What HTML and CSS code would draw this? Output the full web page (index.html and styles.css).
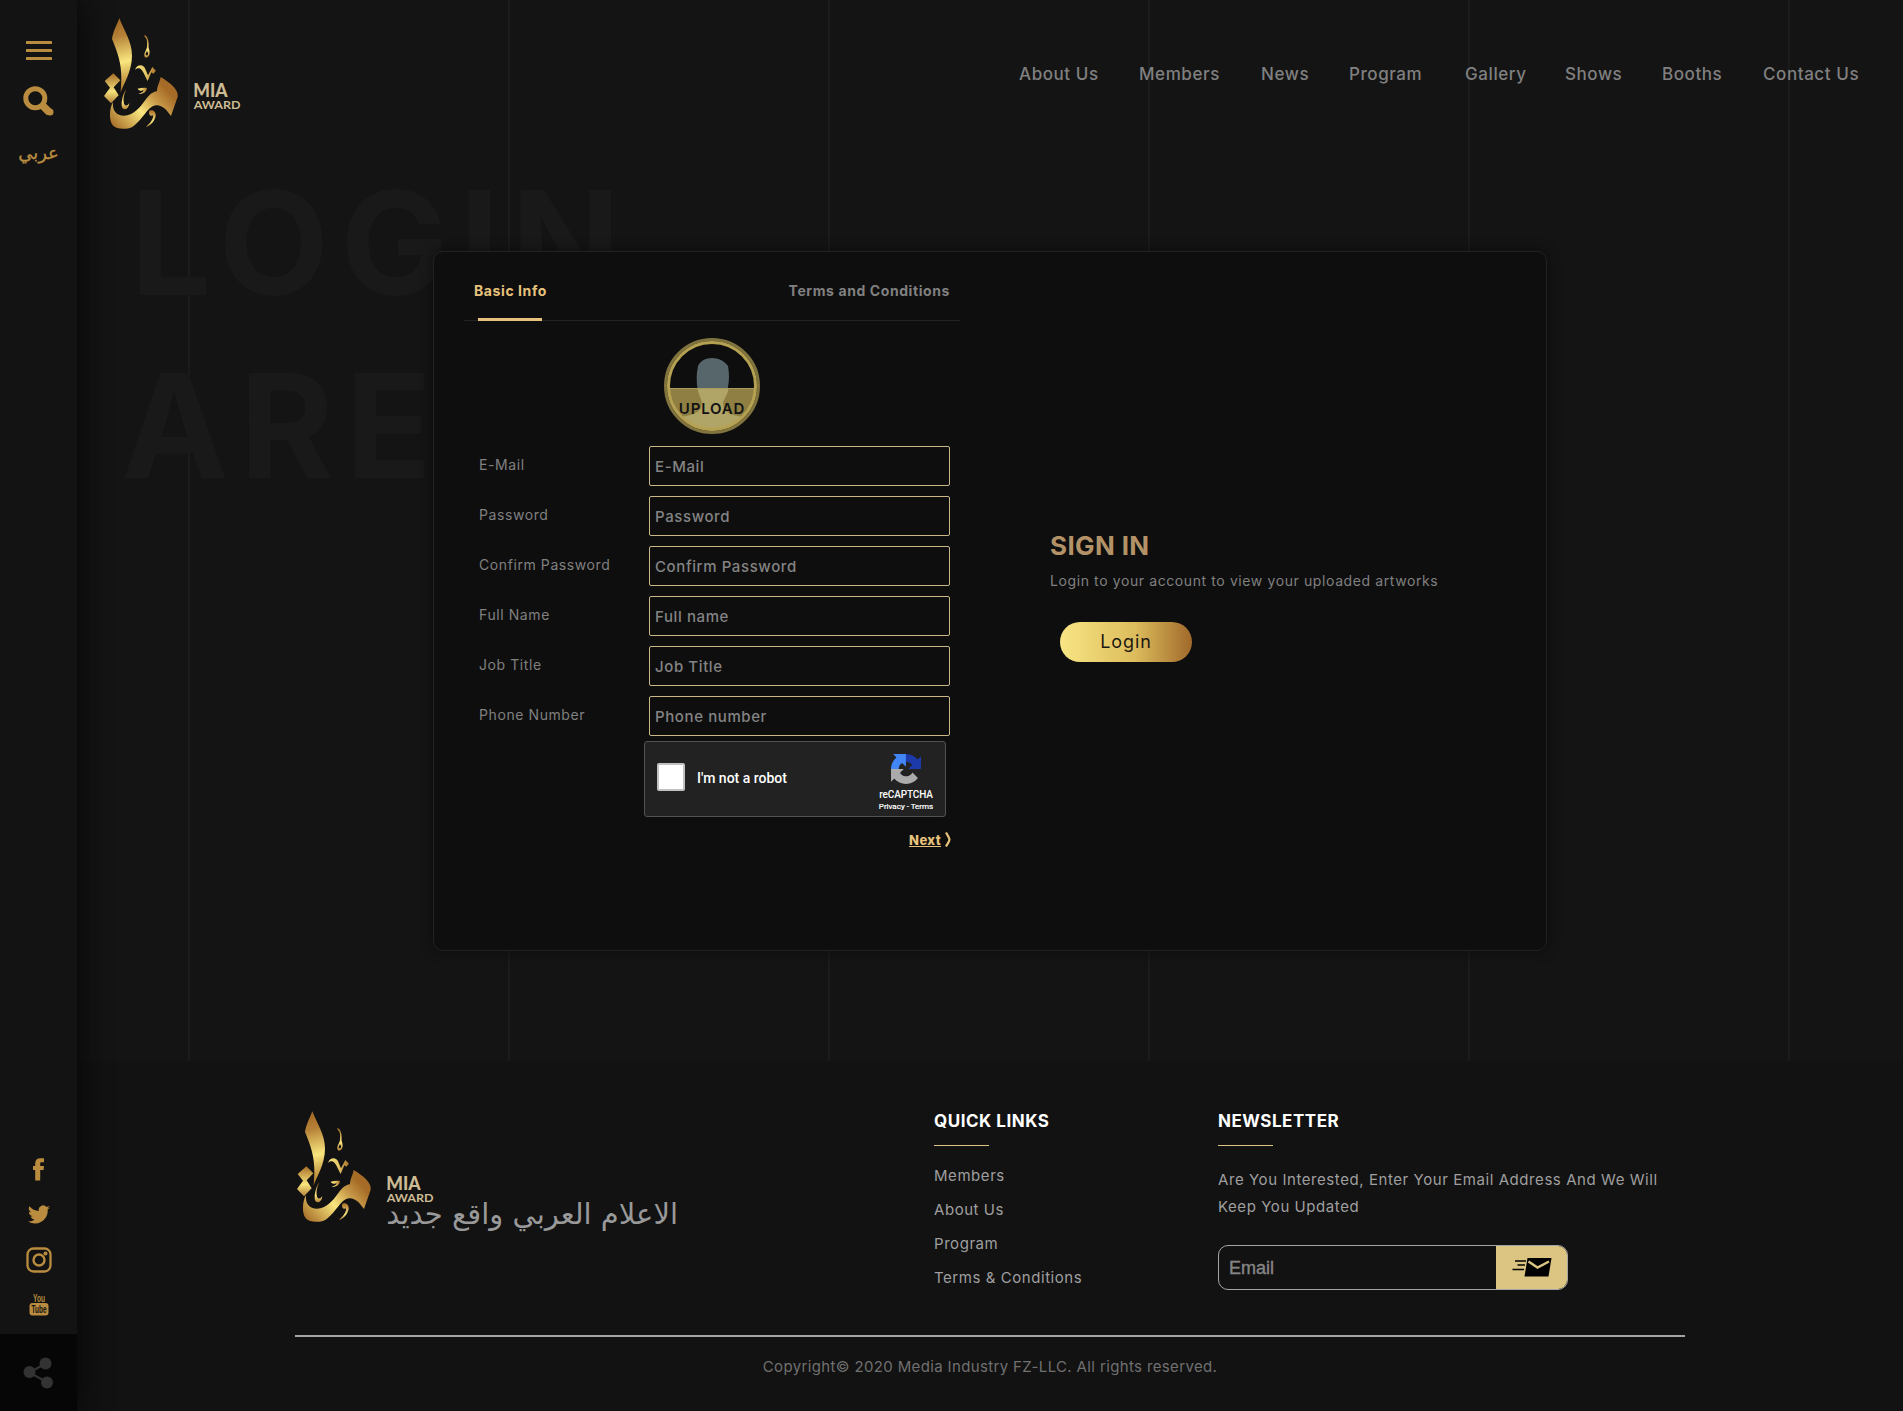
FILE: index.html
```html
<!DOCTYPE html>
<html lang="en">
<head>
<meta charset="utf-8">
<title>MIA Award - Login Area</title>
<link rel="stylesheet" href="styles.css">
</head>
<body>
<svg width="0" height="0" class="defs" aria-hidden="true">
  <defs>
    <linearGradient id="g-alif" x1="340" y1="70" x2="385" y2="270" gradientUnits="userSpaceOnUse">
      <stop offset="0" stop-color="#a66c27"/><stop offset=".2" stop-color="#b58138"/><stop offset=".58" stop-color="#f9e67e"/><stop offset="1" stop-color="#a87026"/>
    </linearGradient>
    <linearGradient id="g-main" x1="352" y1="392" x2="512" y2="245" gradientUnits="userSpaceOnUse">
      <stop offset="0" stop-color="#a9712b"/><stop offset=".42" stop-color="#f9e67e"/><stop offset=".66" stop-color="#c99b4a"/><stop offset=".88" stop-color="#a66c27"/><stop offset="1" stop-color="#a66c27"/>
    </linearGradient>
    <linearGradient id="g-dots" x1="335" y1="220" x2="335" y2="310" gradientUnits="userSpaceOnUse">
      <stop offset="0" stop-color="#a66c27"/><stop offset=".6" stop-color="#f9e67e"/><stop offset="1" stop-color="#b58138"/>
    </linearGradient>
    <linearGradient id="g-small" x1="0" y1="0" x2="1" y2="0">
      <stop offset="0" stop-color="#f9e67e"/><stop offset=".5" stop-color="#e5c868"/><stop offset="1" stop-color="#a66c27"/>
    </linearGradient>
    <linearGradient id="g-hook" x1="0" y1="0" x2="0" y2="1">
      <stop offset="0" stop-color="#a66c27"/><stop offset=".65" stop-color="#f9e67e"/><stop offset="1" stop-color="#b58138"/>
    </linearGradient>
    <symbol id="logo" viewBox="300 45 435 350">
      <path fill="url(#g-alif)" d="M358 55C349 78 339 95 336 117C352 155 365 190 364 240L362 278C370 252 396 215 396 167C396 125 372 92 358 55Z"/>
      <path fill="url(#g-dots)" d="M340 220L361 241L341 262L356 286L333 310L312 288L330 263L314 243Z"/>
      <path fill="url(#g-main)" d="M339 306C328 325 326 360 338 376C350 390 386 390 402 377C430 357 442 320 467 316C487 314 500 330 513 348L533 290C536 268 512 250 482 231C479 248 471 258 471 274C456 276 447 286 436 300C418 325 400 346 372 347C350 347 336 332 339 306Z"/>
      <path fill="url(#g-hook)" d="M379 268C367 282 363 310 366 322C370 332 386 330 388 309C383 318 376 319 372 311C369 300 371 285 379 268Z"/>
      <path fill="url(#g-small)" d="M413 266C422 264 432 262 441 264C440 276 429 283 415 282C424 279 430 276 431 271C425 273 416 273 413 266Z"/>
      <path fill="url(#g-small)" d="M405 209C411 193 430 191 436 207L444 226L457 201L468 212L460 221L454 217L443 243C436 231 430 212 421 206C414 203 409 206 405 209Z"/>
      <path fill="url(#g-hook)" fill-rule="evenodd" d="M432 106C440 102 447 122 446 136C444 143 450 150 449 160C447 175 433 177 433 166C433 154 441 150 441 138C442 124 441 115 436 113ZM441 154C436 160 436 166 440 166C445 166 446 160 441 154Z"/>
      <path fill="url(#g-hook)" d="M448 332C460 327 468 335 467 348C463 366 451 377 438 381C452 368 461 356 459 346C454 350 444 345 448 332Z"/>
      <text x="580" y="292" class="logo-mia" textLength="103" lengthAdjust="spacingAndGlyphs">MIA</text>
      <text x="581" y="327" class="logo-award" textLength="141" lengthAdjust="spacingAndGlyphs">AWARD</text>
    </symbol>
  </defs>
</svg>

<aside class="sidebar">
  <div class="side-top">
    <svg width="26" height="19" viewBox="0 0 26 19"><path d="M1 1.500h24M1 9.500h24M1 17.500h24" stroke="#b98c3f" stroke-width="3" stroke-linecap="round"/></svg>
    <svg class="search" width="31" height="31" viewBox="0 0 31 31"><circle cx="12.3" cy="12.3" r="9.500" fill="none" stroke="#b98c3f" stroke-width="5"/><path d="M19 19l7.500 7.500" stroke="#b98c3f" stroke-width="7.500" stroke-linejoin="round"/><circle cx="27" cy="26" r="3.500" fill="#b98c3f"/></svg>
    <a class="lang" lang="ar">عربي</a>
  </div>
  <div class="side-bottom">
    <svg width="12" height="23" viewBox="0 0 12 23"><path fill="#b98c3f" d="M2.200 22.500V12H0V8h2.200V5.600C2.200 2 4 .3 7.400.3H11v4H8.600C7.500 4.300 7.200 4.700 7.200 5.700V8H11l-.4 4H7.200v10.500z"/></svg>
    <svg width="22" height="19" viewBox="0 0 24 20"><path fill="#b98c3f" d="M24 2.400a9.800 9.800 0 0 1-2.800.8A5 5 0 0 0 23.300.5a9.900 9.900 0 0 1-3.100 1.200 4.900 4.900 0 0 0-8.400 4.500A14 14 0 0 1 1.700 1a4.900 4.900 0 0 0 1.500 6.600A4.900 4.900 0 0 1 1 7v.1a4.900 4.900 0 0 0 4 4.800 5 5 0 0 1-2.300.1 4.900 4.900 0 0 0 4.600 3.400A9.900 9.900 0 0 1 0 17.500 14 14 0 0 0 21.500 5v-.600A10 10 0 0 0 24 2.400z"/></svg>
    <svg width="26" height="26" viewBox="0 0 26 26"><rect x="1.500" y="1.500" width="23" height="23" rx="6" fill="none" stroke="#b98c3f" stroke-width="2.300"/><circle cx="13" cy="13" r="5.500" fill="none" stroke="#b98c3f" stroke-width="2.400"/><circle cx="19.500" cy="6.500" r="2" fill="#b98c3f"/></svg>
    <svg class="youtube" width="20" height="23" viewBox="0 0 20 23"><text x="4" y="9" class="yt-you" textLength="12" lengthAdjust="spacingAndGlyphs">You</text><rect x=".5" y="10" width="19" height="12.500" rx="3" fill="#b98c3f"/><text x="2.500" y="20" class="yt-tube" textLength="15" lengthAdjust="spacingAndGlyphs">Tube</text></svg>
    <div class="share"><svg width="31" height="32" viewBox="0 0 31 32"><path d="M22 7L6 15.500L24 25" fill="none" stroke="#333" stroke-width="2"/><circle cx="22.500" cy="6.500" r="6" fill="#333"/><circle cx="6.500" cy="15" r="6" fill="#333"/><circle cx="24" cy="25.500" r="6" fill="#333"/></svg></div>
  </div>
</aside>

<div class="page">
  <section class="hero">
    <div class="watermark"><span class="first">LOGIN</span><span>AREA</span></div>
    <header class="header">
      <svg class="logo"><use href="#logo"/></svg>
      <nav class="nav">
        <a class="w80">About Us</a><a class="w82">Members</a><a class="w48">News</a><a class="w76">Program</a><a class="w60">Gallery</a><a class="w57">Shows</a><a class="w61">Booths</a><a class="w95">Contact Us</a>
      </nav>
    </header>
    <main class="card">
      <form class="register">
        <div class="tabs"><span class="tab active">Basic Info</span><span class="tab">Terms and Conditions</span></div>
        <div class="avatar">
          <svg width="96" height="96" viewBox="0 0 96 96">
            <clipPath id="disc"><circle cx="48" cy="48" r="43"/></clipPath>
            <g clip-path="url(#disc)">
              <path fill="#57666b" d="M48 20C56 20 61 24 64 28C66 38 65 50 61 59C59 62 59 66 60 70C62 76 72 78 80 79V96H16V79C24 78 34 76 37 70C38 66 38 62 36 59C32 50 32 38 34 28C36 24 40 20 48 20Z"/>
              <rect y="50.500" width="96" height="46" fill="#8f7f42"/>
              <path fill="#b0a566" d="M33.500 51H64.500C64 55 62 58 60 62C58.500 64 59 67 60 70C62 76 72 78 80 79V96H16V79C24 78 34 76 37 70C38 66 38 62 36 59C35 56 34 53 33.500 51Z"/>
              <path d="M0 50.500H96" stroke="#a99a62"/>
            </g>
            <circle cx="48" cy="48" r="46.500" fill="none" stroke="#80733d" stroke-width="3"/>
            <circle cx="48" cy="48" r="43.500" fill="none" stroke="#b5a152" stroke-width="3"/>
          </svg>
          <span>UPLOAD</span>
        </div>
        <div class="fields">
          <label>E-Mail</label><input placeholder="E-Mail">
          <label>Password</label><input placeholder="Password">
          <label>Confirm Password</label><input placeholder="Confirm Password">
          <label>Full Name</label><input placeholder="Full name">
          <label>Job Title</label><input placeholder="Job Title">
          <label>Phone Number</label><input placeholder="Phone number">
        </div>
        <div class="captcha">
          <span class="box"></span><span class="robot">I'm not a robot</span>
          <div class="brand">
            <svg width="30" height="30" viewBox="0 0 64 64"><path fill="#1c3aa9" d="M64 31.955l-.033-1.370V4.687l-7.160 7.160C50.948 4.674 42.033.093 32.050.093c-10.400 0-19.622 4.960-25.458 12.640l11.736 11.860a15.550 15.550 0 0 1 4.754-5.334c2.050-1.600 4.952-2.906 8.968-2.906.485 0 .860.057 1.135.163 4.976.393 9.288 3.140 11.828 7.124l-8.307 8.307L64 31.953"/><path fill="#4285f4" d="M31.862.094l-1.370.033H4.594l7.160 7.160C4.580 13.147 0 22.060 0 32.046c0 10.400 4.960 19.622 12.640 25.458L24.500 45.768a15.550 15.550 0 0 1-5.334-4.754c-1.600-2.050-2.906-4.952-2.906-8.968 0-.485.057-.860.163-1.135.393-4.976 3.140-9.288 7.124-11.828l8.307 8.307L31.860.095"/><path fill="#ababab" d="M.001 32.045l.033 1.370v25.898l7.160-7.160c5.860 7.173 14.774 11.754 24.760 11.754 10.400 0 19.622-4.960 25.458-12.640l-11.736-11.860a15.550 15.550 0 0 1-4.754 5.334c-2.050 1.600-4.952 2.906-8.968 2.906-.485 0-.860-.057-1.135-.163-4.976-.393-9.288-3.140-11.828-7.124l8.307-8.307-27.295-.010"/></svg>
            <b>reCAPTCHA</b><small>Privacy - Terms</small>
          </div>
        </div>
        <div class="next"><a>Next</a><svg width="6" height="15" viewBox="0 0 6 15"><path d="M1 .5C3 4 4.500 6 4.500 7.500S3 11 1 14.500" fill="none" stroke="#e6c27c" stroke-width="2.200"/></svg></div>
      </form>
      <section class="signin">
        <h2>SIGN IN</h2>
        <p>Login to your account to view your uploaded artworks</p>
        <a class="login">Login</a>
      </section>
    </main>
  </section>

  <footer class="footer">
    <div class="cols">
      <div class="about"><svg class="logo"><use href="#logo"/></svg><p class="slogan" lang="ar" dir="rtl">الاعلام العربي واقع جديد</p></div>
      <div class="links">
        <h3>QUICK LINKS</h3>
        <a>Members</a><a>About Us</a><a>Program</a><a>Terms &amp; Conditions</a>
      </div>
      <div class="news">
        <h3>NEWSLETTER</h3>
        <p>Are You Interested, Enter Your Email Address And We Will<br>Keep You Updated</p>
        <div class="subscribe"><input placeholder="Email"><button type="button"><svg width="40" height="19" viewBox="0 0 40 19"><path d="M15.500 0H39.500L36.500 18.500H12.500Z"/><path d="M16.500 3.500L25.500 9.500L37 3.500" fill="none" stroke="#dcc583" stroke-width="2.400"/><path d="M3 3H14M5.500 7H13M.5 11.500H12" stroke="#000" stroke-width="1.600"/></svg></button></div>
      </div>
    </div>
    <div class="copy">Copyright© 2020 Media Industry FZ-LLC. All rights reserved.</div>
  </footer>
</div>
</body>
</html>
```
FILE: styles.css
```css
* { box-sizing: border-box; }
body { margin: 0; display: flex; height: 1411px; overflow: hidden; background: #141414; color: #808080; font-family: Inter, "Open Sans", sans-serif; }
.defs { position: absolute; }
svg { display: block; flex: none; }
h2, h3, p { margin: 0; }
input, button { font-family: inherit; outline: 0; }

.sidebar { width: 77px; height: 1411px; flex: none; background: #131313; display: flex; flex-direction: column; justify-content: space-between; box-shadow: 0 0 32px 2px #060606; z-index: 2; }
.side-top { display: flex; flex-direction: column; align-items: center; padding-top: 41px; }
.search { margin-top: 26px; }
.lang { margin-top: 21px; font: 18px/30px "DejaVu Sans", sans-serif; color: #b98c3f; -webkit-text-stroke: .3px #b98c3f; }
.side-bottom { display: flex; flex-direction: column; align-items: center; }
.side-bottom > svg:nth-child(2) { margin-top: 24px; }
.side-bottom > svg:nth-child(3) { margin-top: 23px; }
.side-bottom > svg:nth-child(4) { margin-top: 20px; }
.youtube { overflow: visible; }
.yt-you { font: 700 11px "Liberation Sans", sans-serif; fill: #b98c3f; }
.yt-tube { font: 700 11px "Liberation Sans", sans-serif; fill: #131313; }
.share { margin-top: 18px; width: 77px; height: 77px; background: #060606; display: flex; align-items: center; justify-content: center; }

.page { width: 1826px; flex: none; display: flex; flex-direction: column; }
.hero { position: relative; height: 1061px; background: repeating-linear-gradient(90deg, transparent 0 318px, #1b1b1b 318px 320px) -207px 0 / 2100px 100% no-repeat; }
.watermark { position: absolute; left: 44px; top: 151px; font-size: 144px; line-height: 183px; font-weight: 700; letter-spacing: 11px; color: #191919; }
.watermark span { display: block; }
.watermark .first { margin-left: 9px; }
.header { position: relative; height: 251px; padding: 15px 45px 0 23px; display: flex; justify-content: space-between; align-items: flex-start; }
.logo { width: 145px; height: 116.667px; }
.logo-mia { font: 900 54px Lato, sans-serif; fill: #cdbb93; }
.logo-award { font: 700 36px Lato, sans-serif; fill: #cdbb93; }
.nav { display: flex; gap: 40px; padding-top: 44px; font-size: 17px; font-weight: 500; line-height: 30px; letter-spacing: .034em; }
.nav a { white-space: nowrap; }
.w80 { width: 80px; } .w82 { width: 82px; } .w48 { width: 48px; } .w76 { width: 76px; } .w60 { width: 60px; } .w57 { width: 57px; } .w61 { width: 61px; } .w95 { width: 95px; }

.card { position: relative; width: 1114px; height: 700px; margin: 0 auto; display: flex; background: #0e0e0e; border: 1px solid #222; border-radius: 10px; box-shadow: 0 0 14px rgba(0,0,0,.45); }
.register { width: 557px; padding: 23px 0 0 30px; }
.tabs { width: 496px; height: 46px; display: flex; justify-content: space-between; padding: 0 10px; border-bottom: 1px solid #222; font-size: 14px; font-weight: 700; line-height: 32px; letter-spacing: .042em; }
.tab { position: relative; }
.tab.active { color: #e6c27c; }
.tab.active::after { content: ""; position: absolute; left: 4px; top: 43px; width: 64px; height: 3px; background: #e6c27c; }
.avatar { position: relative; width: 96px; height: 96px; margin: 17px 0 0 200px; }
.avatar span { position: absolute; left: 0; right: 0; top: 61px; text-align: center; font-size: 15px; font-weight: 600; line-height: 20px; letter-spacing: .055em; color: #121212; }
.fields { display: grid; grid-template-columns: 170px 301px; grid-auto-rows: 40px; row-gap: 10px; margin: 12px 0 0 15px; }
.fields label { font-size: 14px; line-height: 37px; letter-spacing: .042em; }
.fields input { width: 301px; height: 40px; padding: 1px 5px 0; background: transparent; border: 1px solid #c8b784; border-radius: 2px; font-size: 15px; font-weight: 500; letter-spacing: .04em; color: #888; }
input::placeholder { color: #848484; opacity: 1; }
.captcha { width: 302px; height: 76px; margin: 5px 0 0 180px; padding: 0 12px; display: flex; align-items: center; background: #222; border: 1px solid #525252; border-radius: 3px; color: #fff; font-family: Roboto, sans-serif; }
.box { width: 28px; height: 28px; margin-top: -4px; background: #fff; border: 2px solid #c1c1c1; border-radius: 2px; }
.robot { margin: -2px auto 0 12px; font-size: 14px; font-weight: 500; line-height: 20px; }
.brand { width: 54px; display: flex; flex-direction: column; align-items: center; padding-top: 8px; white-space: nowrap; }
.brand b { font-weight: 500; font-size: 10px; line-height: 12px; margin-top: 5px; letter-spacing: -.01em; }
.brand small { font-size: 8px; line-height: 12px; -webkit-text-stroke: .2px #fff; }
.next { width: 487px; display: flex; justify-content: flex-end; align-items: center; gap: 4px; margin-top: 13px; font-size: 13px; line-height: 20px; font-weight: 800; letter-spacing: .03em; color: #e6c27c; }
.next a { text-decoration: underline; }
.next svg { margin-top: -2px; }
.signin { padding: 278px 0 0 59px; }
.signin h2 { font-size: 26px; line-height: 31px; font-weight: 700; letter-spacing: .014em; color: #b39268; }
.signin p { margin-top: 10px; font-size: 14px; line-height: 20px; letter-spacing: .043em; white-space: nowrap; }
.login { display: block; width: 132px; height: 40px; margin: 31px 0 0 10px; border-radius: 20px; background: linear-gradient(90deg, #f8e584, #dcbc5c 57%, #a1692b); color: #1b1811; text-align: center; font-size: 18px; line-height: 40px; letter-spacing: .05em; }

.footer { height: 350px; background: #121212; padding: 47px 218px 0; color: #9f9f9f; }
.cols { display: flex; height: 229px; border-bottom: 2px solid #a5a5a5; }
.about { width: 639px; }
.about .logo { margin-left: -2px; }
.slogan { width: 292px; margin: -31px 0 0 91px; font: 29px/40px "DejaVu Sans", sans-serif; white-space: nowrap; color: #999; }
.links { width: 284px; display: flex; flex-direction: column; font-size: 15px; line-height: 34px; letter-spacing: .037em; }
h3 { position: relative; font-size: 17px; line-height: 26px; font-weight: 700; color: #fff; letter-spacing: .03em; padding-bottom: 12px; margin-bottom: 12px; }
h3::after { content: ""; display: block; position: absolute; left: 0; bottom: 0; width: 55px; height: 1px; background: #dcc583; }
.links h3 { margin-bottom: 13px; }
.news { width: 467px; }
.news p { font-size: 15px; line-height: 27px; letter-spacing: .038em; white-space: nowrap; padding-top: 8px; }
.subscribe { display: flex; width: 350px; height: 45px; margin-top: 25px; border: 1px solid #a5a5a5; border-radius: 10px; overflow: hidden; }
.subscribe input { flex: 1; min-width: 0; border: 0; background: transparent; padding: 2px 10px 0; font: 18px "Liberation Sans", sans-serif; color: #888; -webkit-text-stroke: .4px #888; }
.subscribe button { width: 71px; border: 0; background: #dcc583; display: flex; align-items: center; justify-content: center; padding: 0; }
.copy { text-align: center; font-size: 15px; line-height: 30px; margin-top: 15px; letter-spacing: .024em; color: #707070; }
```
